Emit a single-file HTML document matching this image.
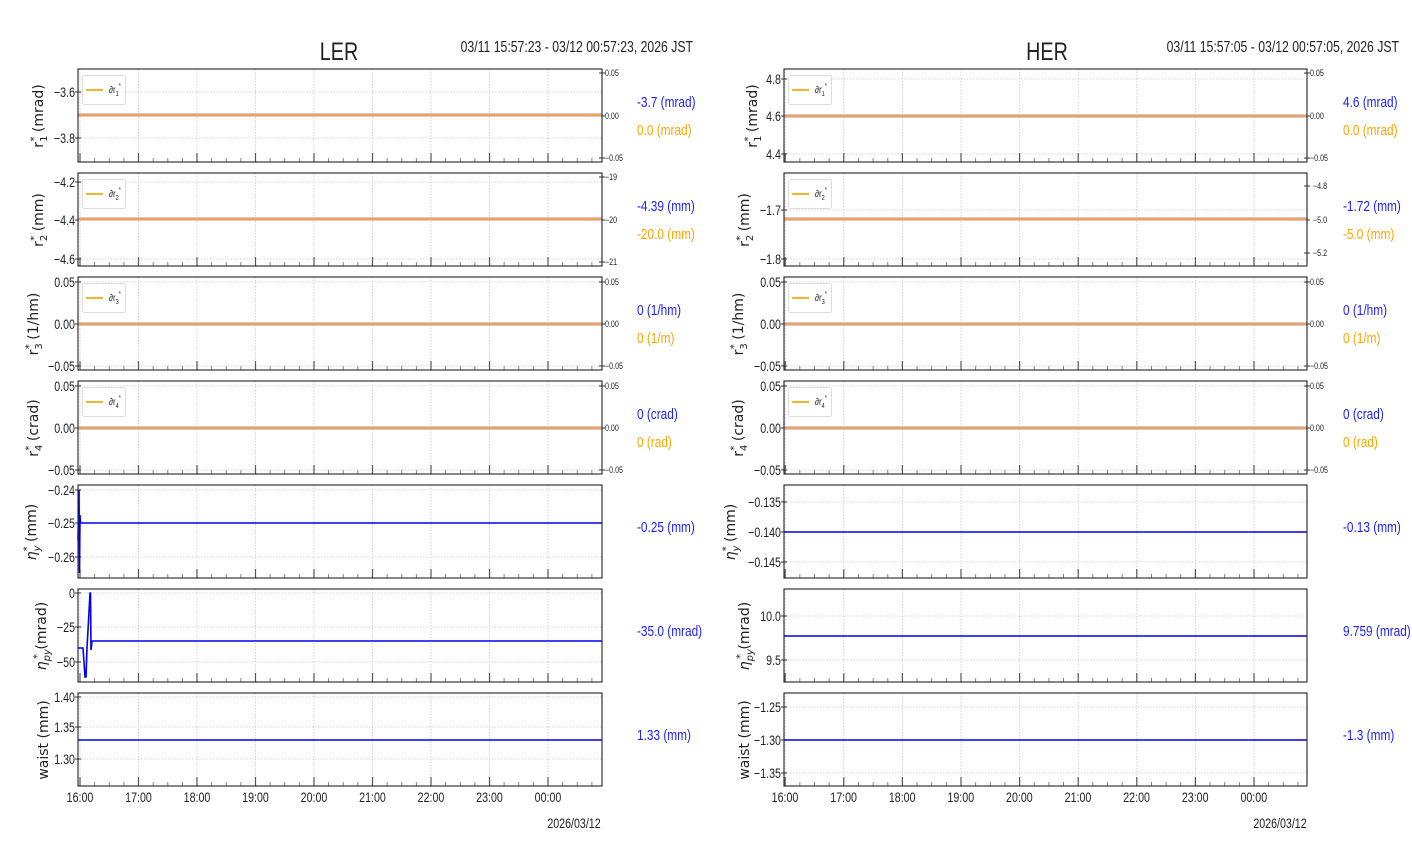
<!DOCTYPE html>
<html><head><meta charset="utf-8"><style>
html,body{margin:0;padding:0;background:#fff;width:1412px;height:864px;overflow:hidden}
svg{display:block}
.n{font-family:"Liberation Sans Narrow","Liberation Sans",sans-serif;fill:#222}
.t{font-size:13.5px}
.s{font-size:9px}
.v{font-size:15px}
.yl{font-family:"DejaVu Sans","Liberation Sans",sans-serif;font-size:14px;fill:#222}
</style></head><body>
<svg id="g" width="1412" height="864" xmlns="http://www.w3.org/2000/svg">
<g id="lines"></g>
<text class="n" x="339" y="60" font-size="25" text-anchor="middle" fill="#111">LER</text>
<text class="n" x="693" y="52" font-size="15.5" text-anchor="end">03/11 15:57:23 - 03/12 00:57:23, 2026 JST</text>
<text class="n" x="1047" y="60" font-size="25" text-anchor="middle" fill="#111">HER</text>
<text class="n" x="1399" y="52" font-size="15.5" text-anchor="end">03/11 15:57:05 - 03/12 00:57:05, 2026 JST</text>

<g class="n t" text-anchor="end">
<text x="75" y="97">−3.6</text><text x="75" y="143">−3.8</text>
<text x="75" y="187">−4.2</text><text x="75" y="225">−4.4</text><text x="75" y="264">−4.6</text>
<text x="75" y="287">0.05</text><text x="75" y="329">0.00</text><text x="75" y="371">−0.05</text>
<text x="75" y="391">0.05</text><text x="75" y="433">0.00</text><text x="75" y="475">−0.05</text>
<text x="75" y="495">−0.24</text><text x="75" y="528">−0.25</text><text x="75" y="562">−0.26</text>
<text x="75" y="598">0</text><text x="75" y="632">−25</text><text x="75" y="667">−50</text>
<text x="75" y="702">1.40</text><text x="75" y="732">1.35</text><text x="75" y="764">1.30</text>
</g>
<g class="n s">
<text x="605" y="76">0.05</text><text x="605" y="119">0.00</text><text x="605" y="161">−0.05</text>
<text x="605" y="180">−19</text><text x="605" y="223">−20</text><text x="605" y="265">−21</text>
<text x="605" y="285">0.05</text><text x="605" y="327">0.00</text><text x="605" y="369">−0.05</text>
<text x="605" y="389">0.05</text><text x="605" y="431">0.00</text><text x="605" y="473">−0.05</text>
</g>
<g class="n t" text-anchor="end">
<text x="781" y="84">4.8</text><text x="781" y="121">4.6</text><text x="781" y="159">4.4</text>
<text x="781" y="215">−1.7</text><text x="781" y="264">−1.8</text>
<text x="781" y="287">0.05</text><text x="781" y="329">0.00</text><text x="781" y="371">−0.05</text>
<text x="781" y="391">0.05</text><text x="781" y="433">0.00</text><text x="781" y="475">−0.05</text>
<text x="781" y="507">−0.135</text><text x="781" y="537">−0.140</text><text x="781" y="567">−0.145</text>
<text x="781" y="621">10.0</text><text x="781" y="665">9.5</text>
<text x="781" y="712">−1.25</text><text x="781" y="745">−1.30</text><text x="781" y="778">−1.35</text>
</g>
<g class="n s">
<text x="1310" y="76">0.05</text><text x="1310" y="119">0.00</text><text x="1310" y="161">−0.05</text>
<text x="1313" y="189">−4.8</text><text x="1313" y="223">−5.0</text><text x="1313" y="256">−5.2</text>
<text x="1310" y="285">0.05</text><text x="1310" y="327">0.00</text><text x="1310" y="369">−0.05</text>
<text x="1310" y="389">0.05</text><text x="1310" y="431">0.00</text><text x="1310" y="473">−0.05</text>
</g>
<g class="n t" text-anchor="middle">
<text x="80" y="802">16:00</text><text x="138.5" y="802">17:00</text><text x="197" y="802">18:00</text><text x="255.5" y="802">19:00</text><text x="314" y="802">20:00</text><text x="372.5" y="802">21:00</text><text x="431" y="802">22:00</text><text x="489.5" y="802">23:00</text><text x="548" y="802">00:00</text>
<text x="785" y="802">16:00</text><text x="843.6" y="802">17:00</text><text x="902.2" y="802">18:00</text><text x="960.8" y="802">19:00</text><text x="1019.4" y="802">20:00</text><text x="1078" y="802">21:00</text><text x="1136.6" y="802">22:00</text><text x="1195.2" y="802">23:00</text><text x="1253.8" y="802">00:00</text>
</g>
<text class="n t" x="574" y="828" text-anchor="middle">2026/03/12</text>
<text class="n t" x="1280" y="828" text-anchor="middle">2026/03/12</text>

<g class="n v">
<text x="637" y="107" fill="#2020ff">-3.7 (mrad)</text><text x="637" y="135" fill="#ffa500">0.0 (mrad)</text>
<text x="637" y="211" fill="#2020ff">-4.39 (mm)</text><text x="637" y="239" fill="#ffa500">-20.0 (mm)</text>
<text x="637" y="315" fill="#2020ff">0 (1/hm)</text><text x="637" y="343" fill="#ffa500">0 (1/m)</text>
<text x="637" y="419" fill="#2020ff">0 (crad)</text><text x="637" y="447" fill="#ffa500">0 (rad)</text>
<text x="637" y="532" fill="#2020ff">-0.25 (mm)</text>
<text x="637" y="636" fill="#2020ff">-35.0 (mrad)</text>
<text x="637" y="740" fill="#2020ff">1.33 (mm)</text>
<text x="1343" y="107" fill="#2020ff">4.6 (mrad)</text><text x="1343" y="135" fill="#ffa500">0.0 (mrad)</text>
<text x="1343" y="211" fill="#2020ff">-1.72 (mm)</text><text x="1343" y="239" fill="#ffa500">-5.0 (mm)</text>
<text x="1343" y="315" fill="#2020ff">0 (1/hm)</text><text x="1343" y="343" fill="#ffa500">0 (1/m)</text>
<text x="1343" y="419" fill="#2020ff">0 (crad)</text><text x="1343" y="447" fill="#ffa500">0 (rad)</text>
<text x="1343" y="532" fill="#2020ff">-0.13 (mm)</text>
<text x="1343" y="636" fill="#2020ff">9.759 (mrad)</text>
<text x="1343" y="740" fill="#2020ff">-1.3 (mm)</text>
</g>

<g class="yl" text-anchor="middle">
<text transform="translate(43,116) rotate(-90)">r<tspan font-size="10" dy="4">1</tspan><tspan font-size="10" dx="-6" dy="-10">*</tspan><tspan dy="6">  (mrad)</tspan></text>
<text transform="translate(43,220) rotate(-90)">r<tspan font-size="10" dy="4">2</tspan><tspan font-size="10" dx="-6" dy="-10">*</tspan><tspan dy="6">  (mm)</tspan></text>
<text transform="translate(38,324) rotate(-90)">r<tspan font-size="10" dy="4">3</tspan><tspan font-size="10" dx="-6" dy="-10">*</tspan><tspan dy="6">  (1/hm)</tspan></text>
<text transform="translate(38,428) rotate(-90)">r<tspan font-size="10" dy="4">4</tspan><tspan font-size="10" dx="-6" dy="-10">*</tspan><tspan dy="6">  (crad)</tspan></text>
<text transform="translate(36,532) rotate(-90)"><tspan font-style="italic">η</tspan><tspan font-size="10" dy="4" font-style="italic">y</tspan><tspan font-size="10" dx="-6" dy="-10">*</tspan><tspan dy="6">  (mm)</tspan></text>
<text transform="translate(46,636) rotate(-90)"><tspan font-style="italic">η</tspan><tspan font-size="10" dy="4" font-style="italic">py</tspan><tspan font-size="10" dx="-10" dy="-10">*</tspan><tspan dy="6">  (mrad)</tspan></text>
<text transform="translate(48,740) rotate(-90)">waist  (mm)</text>
<text transform="translate(757,116) rotate(-90)">r<tspan font-size="10" dy="4">1</tspan><tspan font-size="10" dx="-6" dy="-10">*</tspan><tspan dy="6">  (mrad)</tspan></text>
<text transform="translate(749,220) rotate(-90)">r<tspan font-size="10" dy="4">2</tspan><tspan font-size="10" dx="-6" dy="-10">*</tspan><tspan dy="6">  (mm)</tspan></text>
<text transform="translate(743,324) rotate(-90)">r<tspan font-size="10" dy="4">3</tspan><tspan font-size="10" dx="-6" dy="-10">*</tspan><tspan dy="6">  (1/hm)</tspan></text>
<text transform="translate(743,428) rotate(-90)">r<tspan font-size="10" dy="4">4</tspan><tspan font-size="10" dx="-6" dy="-10">*</tspan><tspan dy="6">  (crad)</tspan></text>
<text transform="translate(735,532) rotate(-90)"><tspan font-style="italic">η</tspan><tspan font-size="10" dy="4" font-style="italic">y</tspan><tspan font-size="10" dx="-6" dy="-10">*</tspan><tspan dy="6">  (mm)</tspan></text>
<text transform="translate(749,636) rotate(-90)"><tspan font-style="italic">η</tspan><tspan font-size="10" dy="4" font-style="italic">py</tspan><tspan font-size="10" dx="-10" dy="-10">*</tspan><tspan dy="6">  (mrad)</tspan></text>
<text transform="translate(749,740) rotate(-90)">waist  (mm)</text>
</g>

<g id="leg">
<g transform="translate(82,75)"><rect x="0.5" y="0.5" width="43" height="29" rx="2" fill="#fff" stroke="#ddd"/><line x1="4" x2="21" y1="15" y2="15" stroke="#ffb030" stroke-width="2"/><text class="n" x="27" y="18" font-size="10">∂r<tspan font-size="7" dy="3">1</tspan><tspan font-size="7" dy="-8">*</tspan></text></g>
<g transform="translate(82,179)"><rect x="0.5" y="0.5" width="43" height="29" rx="2" fill="#fff" stroke="#ddd"/><line x1="4" x2="21" y1="15" y2="15" stroke="#ffb030" stroke-width="2"/><text class="n" x="27" y="18" font-size="10">∂r<tspan font-size="7" dy="3">2</tspan><tspan font-size="7" dy="-8">*</tspan></text></g>
<g transform="translate(82,283)"><rect x="0.5" y="0.5" width="43" height="29" rx="2" fill="#fff" stroke="#ddd"/><line x1="4" x2="21" y1="15" y2="15" stroke="#ffb030" stroke-width="2"/><text class="n" x="27" y="18" font-size="10">∂r<tspan font-size="7" dy="3">3</tspan><tspan font-size="7" dy="-8">*</tspan></text></g>
<g transform="translate(82,387)"><rect x="0.5" y="0.5" width="43" height="29" rx="2" fill="#fff" stroke="#ddd"/><line x1="4" x2="21" y1="15" y2="15" stroke="#ffb030" stroke-width="2"/><text class="n" x="27" y="18" font-size="10">∂r<tspan font-size="7" dy="3">4</tspan><tspan font-size="7" dy="-8">*</tspan></text></g>
<g transform="translate(788,75)"><rect x="0.5" y="0.5" width="43" height="29" rx="2" fill="#fff" stroke="#ddd"/><line x1="4" x2="21" y1="15" y2="15" stroke="#ffb030" stroke-width="2"/><text class="n" x="27" y="18" font-size="10">∂r<tspan font-size="7" dy="3">1</tspan><tspan font-size="7" dy="-8">*</tspan></text></g>
<g transform="translate(788,179)"><rect x="0.5" y="0.5" width="43" height="29" rx="2" fill="#fff" stroke="#ddd"/><line x1="4" x2="21" y1="15" y2="15" stroke="#ffb030" stroke-width="2"/><text class="n" x="27" y="18" font-size="10">∂r<tspan font-size="7" dy="3">2</tspan><tspan font-size="7" dy="-8">*</tspan></text></g>
<g transform="translate(788,283)"><rect x="0.5" y="0.5" width="43" height="29" rx="2" fill="#fff" stroke="#ddd"/><line x1="4" x2="21" y1="15" y2="15" stroke="#ffb030" stroke-width="2"/><text class="n" x="27" y="18" font-size="10">∂r<tspan font-size="7" dy="3">3</tspan><tspan font-size="7" dy="-8">*</tspan></text></g>
<g transform="translate(788,387)"><rect x="0.5" y="0.5" width="43" height="29" rx="2" fill="#fff" stroke="#ddd"/><line x1="4" x2="21" y1="15" y2="15" stroke="#ffb030" stroke-width="2"/><text class="n" x="27" y="18" font-size="10">∂r<tspan font-size="7" dy="3">4</tspan><tspan font-size="7" dy="-8">*</tspan></text></g>
</g>
</svg>
<script>
(function(){
var NS="http://www.w3.org/2000/svg",L=document.getElementById('lines');
function el(t,a){var e=document.createElementNS(NS,t);for(var k in a)e.setAttribute(k,a[k]);L.appendChild(e);return e;}
var tops=[69,173,277,381,485,589,693],H=93;
var sides=[
 {x0:78,x1:602,g0:80,sp:58.5,
  yg:[[92,138],[182,220,259],[282,324,366],[386,428,470],[490,523,557],[593,627,662],[697,727,759]],
  ry:[[73,116,158],[177,220,262],[282,324,366],[386,428,470]],
  data:[115,219,324,428,523,641,740]},
 {x0:784,x1:1307,g0:785.2,sp:58.6,
  yg:[[79,116,154],[210,259],[282,324,366],[386,428,470],[502,532,562],[616,660],[707,740,773]],
  ry:[[73,116,158],[186,220,253],[282,324,366],[386,428,470]],
  data:[116,219,324,428,532,636,740]}];
sides.forEach(function(s,si){
 tops.forEach(function(t,i){
  var b=t+H;
  for(var k=0;k<9;k++){var x=s.g0+k*s.sp;el('line',{x1:x,x2:x,y1:t,y2:b,stroke:'#c8c8c8','stroke-width':0.8,'stroke-dasharray':'1.5,1.5'});}
  s.yg[i].forEach(function(y){el('line',{x1:s.x0,x2:s.x1,y1:y,y2:y,stroke:'#c8c8c8','stroke-width':0.8,'stroke-dasharray':'1.5,1.5'});
    el('line',{x1:s.x0-3,x2:s.x0+3,y1:y,y2:y,stroke:'#333','stroke-width':1});});
  if(s.ry[i]) s.ry[i].forEach(function(y){el('line',{x1:s.x1-3,x2:s.x1+3,y1:y,y2:y,stroke:'#333','stroke-width':1});});
  for(var j=0;;j++){var x=s.g0+j*s.sp/4;if(x>s.x1-1)break;var maj=j%4==0;
    el('line',{x1:x,x2:x,y1:b,y2:b-(maj?9:4),stroke:maj?'#555':'#777','stroke-width':maj?1.2:0.9});}
  var y=s.data[i];
  if(i<4){el('line',{x1:s.x0,x2:s.x1,y1:y,y2:y,stroke:'#d8b0b0','stroke-width':3.5});
          el('line',{x1:s.x0,x2:s.x1,y1:y,y2:y,stroke:'#f0a040','stroke-width':1.6});}
  else if(si==0&&i==4){el('path',{d:'M78 540 L79 490 L79.5 573 L80 515 L80.5 523 L'+s.x1+' 523',fill:'none',stroke:'#0000ee','stroke-width':1.6});}
  else if(si==0&&i==5){el('path',{d:'M78 648 L83 648 L84 662 L85 677 L86 677 L87 648 L88 630 L89 612 L90 593 L90.5 593 L91 650 L92 641 L'+s.x1+' 641',fill:'none',stroke:'#0000ee','stroke-width':1.6});}
  else el('line',{x1:s.x0,x2:s.x1,y1:y,y2:y,stroke:'#0000ee','stroke-width':1.6});
  el('rect',{x:s.x0,y:t,width:s.x1-s.x0,height:H,fill:'none',stroke:'#222','stroke-width':1.1});
 });
});
// condense narrow-font text
var ts=document.querySelectorAll('text.n, .n text');
for(var i=0;i<ts.length;i++){var e=ts[i];if(e.closest('#leg'))continue;var x=parseFloat(e.getAttribute('x'));
 e.setAttribute('transform','translate('+x+',0) scale(0.79,1) translate('+(-x)+',0)');}
var lg=document.querySelectorAll('#leg text');
for(var i=0;i<lg.length;i++){var x=27;lg[i].setAttribute('transform','translate(27,0) scale(0.8,1) translate(-27,0)');}
})();
</script>
</body></html>
